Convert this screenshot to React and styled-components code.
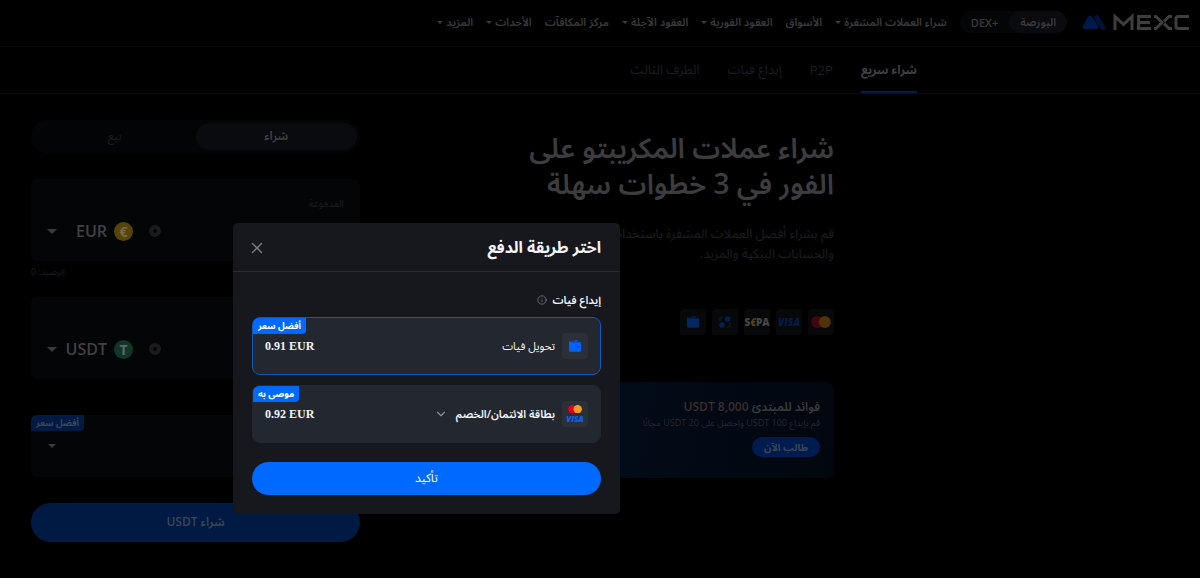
// src/App.jsx
import React from "react";
import styled, { createGlobalStyle } from "styled-components";
import { FiX, FiInfo, FiChevronDown } from "react-icons/fi";

const navItems = [
    { label: "شراء العملات المشفرة", more: true },
    { label: "الأسواق" },
    { label: "العقود الفورية", more: true },
    { label: "العقود الآجلة", more: true },
    { label: "مركز المكافآت" },
    { label: "الأحداث", more: true },
    { label: "المزيد", more: true },
];

const tabs = ["شراء سريع", "P2P", "إيداع فيات", "الطرف الثالث"];

const Wallet = ({ size = 14, color }) => (
    <svg width={size} height={size} viewBox="0 0 14 14" fill={color} aria-hidden="true">
        <path d="M1 2.500 9.500 1v1.400H3L2 3.300h10.200a.8.8 0 0 1 .8.8v7.600a1 1 0 0 1-1 1H2a1 1 0 0 1-1-1z" />
        <circle cx="10.5" cy="8" r=".8" fill="#0a2f7a" />
    </svg>
);

const Mastercard = ({ width = 20, red, orange }) => (
    <svg width={width} height={width * 0.6} viewBox="0 0 20 12" aria-hidden="true">
        <circle cx="6.2" cy="6" r="6" fill={red} />
        <circle cx="13.8" cy="6" r="6" fill={orange} />
    </svg>
);

const Swap = () => (
    <svg width="12" height="12" viewBox="0 0 12 12" aria-hidden="true">
        <circle cx="8.5" cy="3" r="2.7" fill="#052052" />
        <circle cx="3" cy="9" r="2.7" fill="#052052" />
        <path d="M1 5V3a2 2 0 0 1 2-2h1M11 7v2a2 2 0 0 1-2 2H8" fill="none" stroke="#052052" />
    </svg>
);

const Logo = () => (
    <svg width="108" height="18" viewBox="0 0 108 18" role="img" aria-label="MEXC">
        <path d="M14.500 4.500 21 14.500" stroke="#00123a" strokeWidth="5" strokeLinecap="round" />
        <path
            d="M8 4.500 2.500 14h12z"
            fill="#001848"
            stroke="#001848"
            strokeWidth="4"
            strokeLinejoin="round"
        />
        <path
            d="M33 17V3.500l8.500 8 8.500-8V17M69 3.500H56.500v12H69M56.500 9.500H68M72 3.500h2l6 6-6 6h-2M90 3.500h-3l-5 5M90 15.500h-3l-5-5M107 3.500H96q-2 0-2 2v8q0 2 2 2h11"
            fill="none"
            stroke="#3e3e3e"
            strokeWidth="3"
        />
    </svg>
);

const App = () => {
    return (
        <>
            <GlobalStyle />
            <Page dir="rtl" lang="ar">
                <Header>
                    <LogoLink href="#"><Logo /></LogoLink>
                    <Switcher>
                        <SwitchButton $active>البورصة</SwitchButton>
                        <SwitchButton dir="ltr">DEX+</SwitchButton>
                    </Switcher>
                    <Nav>
                        {navItems.map((item) => (
                            <NavLink href="#" key={item.label}>
                                {item.label}
                                {item.more && <Caret $size={3} />}
                            </NavLink>
                        ))}
                    </Nav>
                </Header>
                <Tabs>
                    {tabs.map((tab, i) => (
                        <Tab href="#" key={tab} $active={i === 0}>{tab}</Tab>
                    ))}
                </Tabs>
                <Main>
                    <Hero>
                        <Title>شراء عملات المكريبتو على الفور في 3 خطوات سهلة</Title>
                        <SubTitle>
                            قم بشراء أفضل العملات المشفرة باستخدام البطاقات والحسابات البنكية والمزيد.
                        </SubTitle>
                        <Methods>
                            <Method><Mastercard red="#400710" orange="#523008" /></Method>
                            <Method><Visa>VISA</Visa></Method>
                            <Method><Sepa>S<i>€</i>PA</Sepa></Method>
                            <Method><Swap /></Method>
                            <Method><Wallet color="#052660" /></Method>
                        </Methods>
                        <Banner>
                            <BannerTitle>فوائد للمبتدئ <span>8,000 USDT</span></BannerTitle>
                            <BannerText>قم بإيداع 100 USDT واحصل على 20 USDT مجانًا</BannerText>
                            <BannerButton>طالب الآن</BannerButton>
                        </Banner>
                    </Hero>
                    <Form>
                        <Segment>
                            <SegmentButton $active>شراء</SegmentButton>
                            <SegmentButton>بيع</SegmentButton>
                        </Segment>
                        <Field>
                            <FieldLabel>المدفوعة</FieldLabel>
                            <Currency>
                                <Dot />
                                <Coin $bg="#57430d" $color="#7a6a3c">€</Coin>
                                <Code>EUR</Code>
                                <Caret $size={5} />
                            </Currency>
                        </Field>
                        <Balance>الرصيد: 0</Balance>
                        <Field>
                            <FieldLabel>المستلمة</FieldLabel>
                            <Currency>
                                <Dot />
                                <Coin $bg="#113628" $color="#586b64">T</Coin>
                                <Code>USDT</Code>
                                <Caret $size={5} />
                            </Currency>
                        </Field>
                        <PaymentField>
                            <Tag $dim>أفضل سعر</Tag>
                            <Caret $size={4} />
                        </PaymentField>
                        <BuyButton>شراء USDT</BuyButton>
                    </Form>
                </Main>
                <Overlay>
                    <Modal role="dialog" aria-labelledby="modal-title">
                        <ModalHeader>
                            <ModalTitle id="modal-title">اختر طريقة الدفع</ModalTitle>
                            <CloseButton aria-label="إغلاق"><FiX size={18} /></CloseButton>
                        </ModalHeader>
                        <ModalBody>
                            <Group>إيداع فيات <FiInfo size={10} color="#777b82" /></Group>
                            <Option $active>
                                <Tag>أفضل سعر</Tag>
                                <OptionIcon><Wallet color="#0062ff" /></OptionIcon>
                                <OptionName>تحويل فيات</OptionName>
                                <Price dir="ltr">0.91 EUR</Price>
                            </Option>
                            <Option>
                                <Tag>موصى به</Tag>
                                <OptionIcon>
                                    <Mastercard width={14} red="#e2001f" orange="#ff9b24" />
                                    <Visa $bright>VISA</Visa>
                                </OptionIcon>
                                <OptionName $bold>بطاقة الائتمان/الخصم</OptionName>
                                <FiChevronDown size={14} color="#8a8e96" />
                                <Price dir="ltr">0.92 EUR</Price>
                            </Option>
                            <ConfirmButton>تأكيد</ConfirmButton>
                        </ModalBody>
                    </Modal>
                </Overlay>
            </Page>
        </>
    );
};

const GlobalStyle = createGlobalStyle`
  * {
    box-sizing: border-box;
  }

  body {
    margin: 0;
    background: #000;
  }

  button {
    font-family: inherit;
    border: 0;
    padding: 0;
    cursor: pointer;
  }

  a {
    text-decoration: none;
  }
`;

const Page = styled.div`
  position: relative;
  min-height: 100vh;
  background: #000;
  color: #3c3c3e;
  font-family: "Open Sans", "Noto Sans", "Noto Sans Arabic", "Segoe UI", sans-serif;
  overflow: hidden;
`;

const Header = styled.header`
  display: flex;
  align-items: center;
  height: 47px;
  padding: 0 10px 2px;
  border-bottom: 1px solid #0a0a0b;
`;

const LogoLink = styled.a`
  display: flex;
`;

const Switcher = styled.div`
  display: flex;
  height: 22px;
  margin-right: 15px;
  border-radius: 11px;
  background: #040507;
`;

const SwitchButton = styled.button`
  padding: 0 11px;
  border-radius: 11px;
  font-size: 11px;
  font-weight: 600;
  color: #3a3a3c;
  background: ${({ $active }) => ($active ? '#090b0f' : 'transparent')};
`;

const Nav = styled.nav`
  display: flex;
  gap: 13px;
  margin-right: 13px;
`;

const NavLink = styled.a`
  display: flex;
  align-items: center;
  gap: 3px;
  font-size: 11px;
  font-weight: 600;
  white-space: nowrap;
  color: #3a3a3c;
`;

const Caret = styled.span`
  border: ${({ $size }) => $size}px solid transparent;
  border-top-color: #3a3a3c;
  border-bottom: 0;
`;

const Tabs = styled.nav`
  display: flex;
  gap: 28px;
  height: 47px;
  padding-right: 283px;
  border-bottom: 1px solid #0a0a0b;
`;

const Tab = styled.a`
  display: flex;
  align-items: center;
  padding-top: 2px;
  border-bottom: 2px solid ${({ $active }) => ($active ? '#001c50' : 'transparent')};
  font-size: ${({ $active }) => ($active ? 12 : 13)}px;
  font-weight: ${({ $active }) => ($active ? 700 : 400)};
  white-space: nowrap;
  color: ${({ $active }) => ($active ? '#414143' : '#1d1d20')};
`;

const Main = styled.main`
  display: flex;
  justify-content: space-between;
  padding: 26px 366px 35px 31px;
`;

const Hero = styled.section`
  width: 310px;
  padding-top: 9px;
`;

const Title = styled.h1`
  margin: 0;
  font-size: 28px;
  line-height: 36px;
  font-weight: 600;
`;

const SubTitle = styled.p`
  margin: 22px 0 0;
  font-size: 13px;
  line-height: 20px;
  color: #1d1d20;
`;

const Methods = styled.div`
  display: flex;
  gap: 6px;
  margin-top: 46px;
`;

const Method = styled.span`
  display: flex;
  align-items: center;
  justify-content: center;
  width: 26px;
  height: 26px;
  border-radius: 4px;
  background: #06080a;
`;

const Visa = styled.b`
  font-family: "Open Sans", sans-serif;
  font-style: italic;
  font-size: ${({ $bright }) => ($bright ? 8 : 10)}px;
  line-height: 8px;
  font-weight: 800;
  color: ${({ $bright }) => ($bright ? '#0a63f0' : '#041d4e')};
`;

const Sepa = styled.b`
  direction: ltr;
  font-family: "Open Sans", sans-serif;
  font-size: 10px;
  font-weight: 800;
  color: #454545;

  i {
    color: #54400b;
  }
`;

const Banner = styled.div`
  display: flex;
  flex-direction: column;
  align-items: flex-start;
  height: 96px;
  margin-top: 47px;
  padding: 15px 14px;
  border-radius: 8px;
  background: linear-gradient(100deg, #020e1e, #020914 60%, #02070f);
`;

const BannerTitle = styled.h2`
  margin: 0;
  font-size: 12px;
  line-height: 20px;
  font-weight: 600;

  span {
    color: #3c2f28;
  }
`;

const BannerText = styled.p`
  margin: 0;
  font-size: 9px;
  line-height: 12px;
  white-space: nowrap;
  color: #25282d;
`;

const BannerButton = styled.button`
  height: 20px;
  margin-top: 8px;
  padding: 0 12px;
  border-radius: 10px;
  font-size: 10px;
  font-weight: 700;
  color: #3d4656;
  background: #001c4e;
`;

const Form = styled.section`
  width: 329px;
`;

const Segment = styled.div`
  display: flex;
  height: 33px;
  margin-bottom: 26px;
  padding: 3px;
  border-radius: 17px;
  background: #030406;
`;

const SegmentButton = styled.button`
  flex: 1;
  border-radius: 14px;
  font-size: 12px;
  font-weight: ${({ $active }) => ($active ? 600 : 400)};
  color: ${({ $active }) => ($active ? '#414143' : '#1d1d20')};
  background: ${({ $active }) => ($active ? '#090b0f' : 'transparent')};
`;

const Field = styled.div`
  height: 82px;
  padding: 16px;
  border-radius: 6px;
  background: #040507;
`;

const FieldLabel = styled.div`
  font-size: 10px;
  line-height: 16px;
  color: #1d1d20;
`;

const Currency = styled.div`
  display: flex;
  align-items: center;
  justify-content: flex-end;
  height: 40px;
`;

const Dot = styled.span`
  width: 12px;
  height: 12px;
  margin-left: 16px;
  border: 4px solid #1b1b1d;
  border-radius: 50%;
`;

const Coin = styled.span`
  display: flex;
  align-items: center;
  justify-content: center;
  width: 19px;
  height: 19px;
  border-radius: 50%;
  font-size: 14px;
  font-weight: 700;
  color: ${({ $color }) => $color};
  background: ${({ $bg }) => $bg};
`;

const Code = styled.span`
  width: 57px;
  padding-right: 7px;
  font-size: 16px;
  font-weight: 600;
  color: #414143;
`;

const Balance = styled.div`
  height: 36px;
  padding-top: 5px;
  font-size: 9px;
  line-height: 12px;
  text-align: left;
  color: #1d1d20;
`;

const PaymentField = styled.div`
  position: relative;
  display: flex;
  align-items: center;
  justify-content: flex-end;
  height: 62px;
  margin-top: 36px;
  padding-left: 17px;
  border-radius: 6px;
  background: #040507;
`;

const Tag = styled.span`
  position: absolute;
  top: 0;
  left: 0;
  padding: 0 5px;
  border-radius: 6px 0 4px 0;
  font-size: 9px;
  line-height: 16px;
  font-weight: 700;
  color: ${({ $dim }) => ($dim ? '#3d4656' : '#fff')};
  background: ${({ $dim }) => ($dim ? '#001a44' : '#0069ff')};
`;

const BuyButton = styled.button`
  width: 100%;
  height: 39px;
  margin-top: 26px;
  border-radius: 20px;
  font-size: 12px;
  font-weight: 600;
  color: #3d4656;
  background: #001a44;
`;

const Overlay = styled.div`
  position: absolute;
  inset: 0;
  display: flex;
  justify-content: flex-end;
  align-items: flex-start;
  padding: 223px 0 0 233px;
`;

const Modal = styled.div`
  width: 387px;
  border-radius: 5px;
  background: #17181e;
  color: #f2f3f5;
`;

const ModalHeader = styled.div`
  display: flex;
  align-items: center;
  justify-content: space-between;
  height: 49px;
  padding: 2px 19px 0 15px;
  border-bottom: 1px solid #282b31;
`;

const ModalTitle = styled.h2`
  margin: 0;
  font-size: 16px;
  font-weight: 700;
`;

const CloseButton = styled.button`
  display: flex;
  color: #777b82;
  background: transparent;
`;

const ModalBody = styled.div`
  padding: 19px;
`;

const Group = styled.div`
  display: flex;
  align-items: center;
  gap: 5px;
  height: 18px;
  margin-bottom: 8px;
  font-size: 11px;
  font-weight: 600;
`;

const Option = styled.div`
  position: relative;
  display: flex;
  align-items: center;
  height: 58px;
  margin-bottom: 10px;
  padding: 0 12px;
  border: 1px solid ${({ $active }) => ($active ? '#0d57bd' : '#23272f')};
  border-radius: 8px;
  background: #23272f;
`;

const OptionIcon = styled.span`
  display: flex;
  flex-direction: column;
  align-items: center;
  justify-content: center;
  gap: 2px;
  width: 26px;
  height: 26px;
  border-radius: 4px;
  background: #2b2f38;
`;

const OptionName = styled.span`
  margin: 0 7px 0 8px;
  font-size: 11px;
  font-weight: ${({ $bold }) => ($bold ? 600 : 400)};
`;

const Price = styled.span`
  margin-right: auto;
  font-family: "Liberation Serif", serif;
  font-size: 12px;
  font-weight: 700;
`;

const ConfirmButton = styled.button`
  width: 100%;
  height: 33px;
  margin-top: 9px;
  border-radius: 17px;
  font-size: 12px;
  color: #fff;
  background: #0069ff;
`;

export default App;
